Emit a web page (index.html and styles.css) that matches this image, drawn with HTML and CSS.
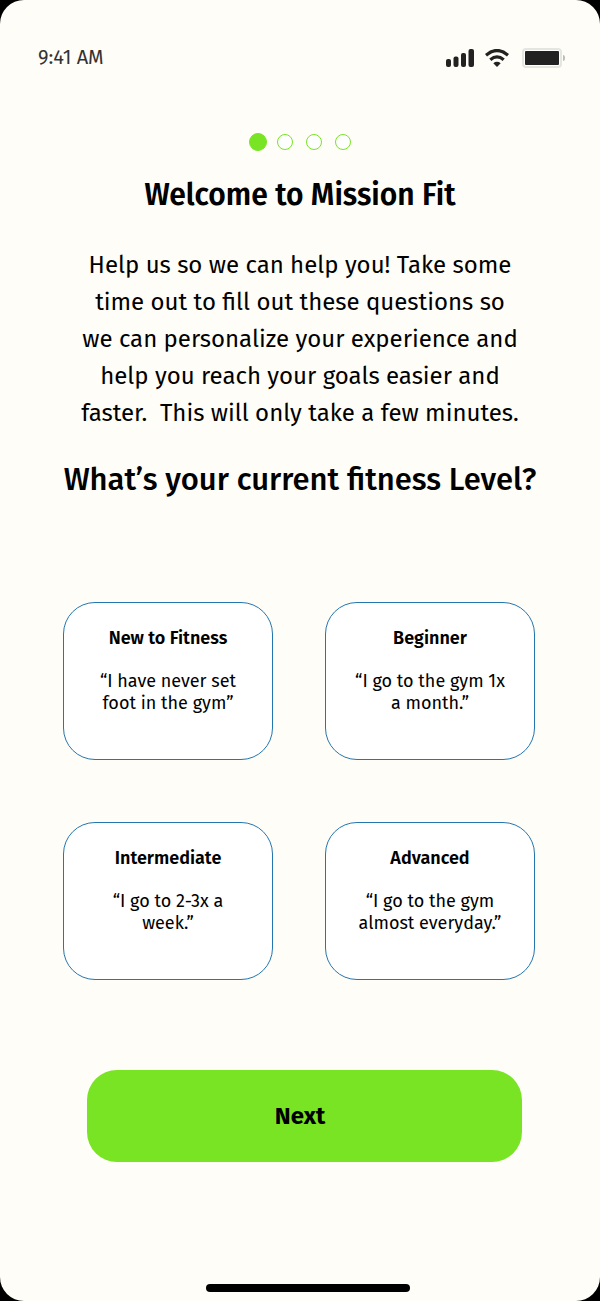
FILE: index.html
```html
<!DOCTYPE html>
<html lang="en">
<head>
<meta charset="utf-8">
<meta name="viewport" content="width=device-width, initial-scale=1">
<title>Mission Fit</title>
<link rel="stylesheet" href="styles.css">
</head>
<body>
<div class="screen">
  <header class="status">
    <time class="clock">9:41 AM</time>
    <div class="indicators">
      <svg width="28" height="18" viewBox="0 0 28 18" fill="#222" aria-hidden="true">
        <rect x="0" y="10" width="5" height="8" rx="2"/>
        <rect x="7.5" y="7.5" width="5" height="10.500" rx="2"/>
        <rect x="15" y="4" width="5" height="14" rx="2"/>
        <rect x="22.500" y="0" width="5.500" height="18" rx="2"/>
      </svg>
      <svg class="wifi" width="24" height="18" viewBox="0 0 24 18" fill="none" stroke="#222" aria-hidden="true">
        <path d="M1 6.200Q12-3.200 23 6.200" stroke-width="3.200"/>
        <path d="M5.300 10.800Q12 5 18.700 10.800" stroke-width="3.200"/>
        <path d="M8.300 14.200Q12 11.400 15.700 14.200L12 18Z" fill="#222" stroke="none"/>
      </svg>
      <svg class="battery" width="44" height="20" viewBox="0 0 44 20" aria-hidden="true">
        <rect x="1" y="1" width="38" height="18" rx="3" fill="#fff" stroke="#e6e6e1" stroke-width="2"/>
        <rect x="3" y="3" width="34" height="14" rx="1" fill="#222"/>
        <path d="M41 7q2 0 2 3t-2 3z" fill="#bbb"/>
      </svg>
    </div>
  </header>
  <main class="content">
    <ol class="steps" aria-label="Step 1 of 4">
      <li class="step step-current"></li>
      <li class="step"></li>
      <li class="step"></li>
      <li class="step"></li>
    </ol>
    <h1 class="title">Welcome to Mission Fit</h1>
    <p class="intro">Help us so we can help you! Take some<br>time out to fill out these questions so<br>we can personalize your experience and<br>help you reach your goals easier and<br>faster.&nbsp; This will only take a few minutes.</p>
    <h2 class="question">What’s your current fitness Level?</h2>
    <div class="levels">
      <button class="level" type="button"><span class="level-name">New to Fitness</span><span class="quote">“I have never set<br>foot in the gym”</span></button>
      <button class="level" type="button"><span class="level-name">Beginner</span><span class="quote">“I go to the gym 1x<br>a month.”</span></button>
      <button class="level" type="button"><span class="level-name">Intermediate</span><span class="quote">“I go to 2-3x a<br>week.”</span></button>
      <button class="level" type="button"><span class="level-name">Advanced</span><span class="quote">“I go to the gym<br>almost everyday.”</span></button>
    </div>
    <button class="next" type="button">Next</button>
  </main>
  <div class="home-bar"></div>
</div>
</body>
</html>
```
FILE: styles.css
```css
* { box-sizing: border-box; }
body {
  margin: 0;
  background: #000;
  color: #000;
  font-family: "Fira Sans", "Noto Sans", sans-serif;
}
button { font: inherit; color: inherit; cursor: pointer; }
.screen {
  display: flex;
  flex-direction: column;
  min-height: 100vh;
  padding: 46px 0 9px;
  border-radius: 24px;
  background: #fffdf8;
}
.status {
  display: flex;
  justify-content: space-between;
  align-items: center;
  height: 24px;
  padding: 0 34px 0 38px;
}
.clock { font-size: 20px; line-height: 22px; margin-bottom: 2px; color: #333; }
.indicators { display: flex; align-items: center; }
.wifi { margin-left: 11px; }
.battery { margin-left: 13px; }
.content {
  flex: 1;
  display: flex;
  flex-direction: column;
  align-items: center;
  padding: 63px 24px 0;
  text-align: center;
}
.steps {
  display: flex;
  align-items: center;
  gap: 13px;
  height: 18px;
  margin: 0;
  padding: 0;
  list-style: none;
}
.step {
  width: 16px;
  height: 16px;
  border: 1px solid #78e424;
  border-radius: 50%;
  background: #fff;
}
.step-current {
  width: 18px;
  height: 18px;
  margin-right: -3px;
  background: #78e424;
}
.title, .question { margin: 0; line-height: 40px; white-space: nowrap; }
.title { margin-top: 24px; font-size: 30px; font-weight: 600; }
.intro {
  margin: 32px 0 0;
  font-size: 24px;
  line-height: 37px;
  white-space: nowrap;
}
.question { margin-top: 28px; font-size: 31px; font-weight: 500; }
.levels {
  display: grid;
  grid-template-columns: 1fr 1fr;
  gap: 62px 52px;
  width: 100%;
  max-width: 472px;
  margin: 102px 2px 0 0;
}
.level {
  display: flex;
  flex-direction: column;
  align-items: center;
  min-height: 158px;
  padding: 24px 8px;
  border: 1px solid #2376ae;
  border-radius: 32px;
  background: #fff;
  font-size: 18px;
  line-height: 22px;
  white-space: nowrap;
}
.level-name { margin-bottom: 21px; font-weight: 600; }
.next {
  width: 100%;
  max-width: 435px;
  height: 92px;
  margin: 90px 0 0 8px;
  padding: 0 8px 0 0;
  border: 0;
  border-radius: 30px;
  background: #78e424;
  font-size: 24px;
  font-weight: 700;
}
.home-bar {
  width: 34%;
  height: 8px;
  margin: 24px auto 0;
  border-radius: 4px;
  background: #000;
  translate: 8px 0;
}
```
